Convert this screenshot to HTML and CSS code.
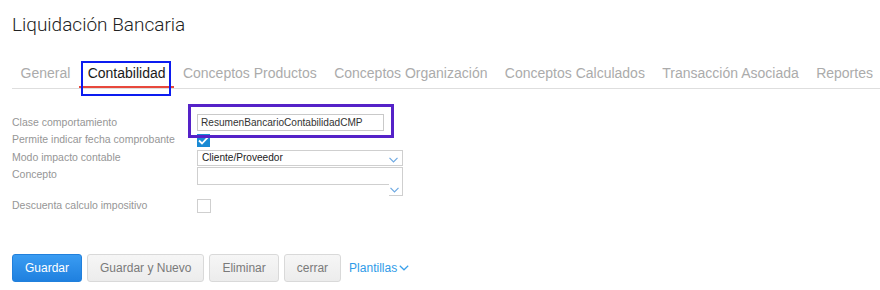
FILE: index.html
```html
<!DOCTYPE html>
<html>

<head>
    <meta charset="UTF-8">
    <title>Liquidación Bancaria</title>
    <link rel="stylesheet" href="styles.css">
</head>

<body>
    <h1 class="title">Liquidación Bancaria</h1>

    <ul class="tabs">
        <li class="tab">General</li>
        <li class="tab active">Contabilidad</li>
        <li class="tab">Conceptos Productos</li>
        <li class="tab">Conceptos Organización</li>
        <li class="tab">Conceptos Calculados</li>
        <li class="tab">Transacción Asociada</li>
        <li class="tab">Reportes</li>
    </ul>

    <div class="form">
        <div class="row r1">
            <label class="lbl">Clase comportamiento</label>
            <div class="input marked">ResumenBancarioContabilidadCMP</div>
        </div>
        <div class="row r2">
            <label class="lbl">Permite indicar fecha comprobante</label>
            <span class="check on">
                <svg width="11" height="9" viewBox="0 0 11 9"><path d="M1 4.5 L4 7.5 L10 1.2" fill="none" stroke="#fff" stroke-width="1.8"/></svg>
            </span>
        </div>
        <div class="row r3">
            <label class="lbl">Modo impacto contable</label>
            <div class="select">
                <span>Cliente/Proveedor</span>
                <svg class="chev" width="9" height="6" viewBox="0 0 9 6"><path d="M0.5 0.8 L4.5 4.8 L8.5 0.8" fill="none" stroke="#6ea9e2" stroke-width="1.2"/></svg>
            </div>
        </div>
        <div class="row r4">
            <label class="lbl">Concepto</label>
            <div class="select tall">
                <svg class="chev low" width="9" height="6" viewBox="0 0 9 6"><path d="M0.5 0.8 L4.5 4.8 L8.5 0.8" fill="none" stroke="#6ea9e2" stroke-width="1.2"/></svg>
            </div>
        </div>
        <div class="row r5">
            <label class="lbl">Descuenta calculo impositivo</label>
            <span class="check"></span>
        </div>
    </div>

    <div class="actions">
        <button class="btn primary">Guardar</button>
        <button class="btn">Guardar y Nuevo</button>
        <button class="btn">Eliminar</button>
        <button class="btn">cerrar</button>
        <a class="link">Plantillas
            <svg width="10" height="6" viewBox="0 0 10 6"><path d="M0.8 0.8 L5 4.8 L9.2 0.8" fill="none" stroke="#3aa0ea" stroke-width="1.2"/></svg>
        </a>
    </div>
</body>

</html>
```
FILE: styles.css
```css
html,
body {
    margin: 0;
    background: #fff;
    font-family: "Liberation Sans", Arial, sans-serif;
}

body {
    padding-left: 12px;
}

.title {
    margin: 15px 0 0 0;
    font-family: Roboto, "Liberation Sans", sans-serif;
    font-size: 19px;
    font-weight: 300;
    line-height: 20px;
    color: #222;
}

/* pestañas */
.tabs {
    display: flex;
    margin: 30px 0 0 0;
    padding: 0;
    list-style: none;
    border-bottom: 1px solid #dedede;
}

.tab {
    position: relative;
    padding: 0 8.7px 5px;
    font-size: 14px;
    line-height: 16px;
    color: #ababab;
    border-bottom: 2px solid transparent;
    white-space: nowrap;
}

.tab:first-child {
    padding-left: 8.5px;
}

.tab.active {
    color: #1a1a1a;
    border-bottom-color: #e8483c;
}

/* marca azul sobre la pestaña activa */
.tab.active::after {
    content: "";
    position: absolute;
    left: 2px;
    top: -4px;
    width: 86px;
    height: 31px;
    border: 2px solid #0c1cf0;
}

/* formulario */
.form {
    margin-top: 25px;
    font-size: 10.5px;
}

.row {
    display: flex;
    align-items: flex-start;
}

.lbl {
    width: 185px;
    flex: none;
    color: #969696;
    line-height: 14px;
    white-space: nowrap;
}

.r1 .lbl,
.r2 .lbl {
    line-height: 17px;
}

.r2 {
    height: 17px;
}

.r3 {
    margin-top: 2px;
}

.r4 {
    margin-top: 1px;
    height: 29px;
}

.r5 {
    margin-top: 3px;
}

.r5 .lbl {
    line-height: 12px;
}

.input {
    position: relative;
    box-sizing: border-box;
    width: 187px;
    height: 17px;
    padding-left: 3px;
    border: 1px solid #c9c9c9;
    color: #333;
    font-size: 10.1px;
    line-height: 15px;
}

/* marca violeta sobre el campo */
.input.marked::after {
    content: "";
    position: absolute;
    left: -10px;
    top: -11px;
    width: 200px;
    height: 28px;
    border: 3px solid #5522c8;
}

.check {
    box-sizing: border-box;
    width: 14px;
    height: 14px;
    border: 1px solid #cfcfcf;
    background: #fff;
}

.check.on {
    display: flex;
    align-items: center;
    justify-content: center;
    margin-top: 3px;
    width: 13px;
    height: 13px;
    border-color: #1a8ad4;
    background: #1a8ad4;
}

.select {
    position: relative;
    display: flex;
    align-items: center;
    justify-content: space-between;
    box-sizing: border-box;
    width: 206px;
    height: 16px;
    padding: 0 4px 0 4px;
    border: 1px solid #cfcfcf;
    color: #222;
    font-size: 10.1px;
    line-height: 14px;
}

.select.tall {
    height: 18px;
}

/* columna de la flecha que baja */
.select.tall::after {
    content: "";
    position: absolute;
    right: -1px;
    top: 16px;
    width: 13px;
    height: 11px;
    border-right: 1px solid #cfcfcf;
    border-bottom: 1px solid #cfcfcf;
    background: #fff;
}

.chev {
    margin-left: auto;
    margin-top: 3px;
}

.chev.low {
    position: relative;
    z-index: 1;
    margin-top: 28px;
    margin-right: -1px;
}

/* botones */
.actions {
    display: flex;
    align-items: center;
    gap: 5px;
    margin-top: 41px;
}

.btn {
    height: 28px;
    padding: 0 12px;
    font-family: "Liberation Sans", Arial, sans-serif;
    font-size: 12px;
    color: #7a7a7a;
    background: linear-gradient(#f6f6f6, #ececec);
    border: 1px solid #d9d9d9;
    border-radius: 3px;
}

.btn.primary {
    color: #fff;
    background: linear-gradient(#3a9cf2, #1f80df);
    border-color: #2180dc;
}

.link {
    display: flex;
    align-items: center;
    gap: 2px;
    margin-left: 3px;
    font-size: 12px;
    color: #2f9be8;
}
```
